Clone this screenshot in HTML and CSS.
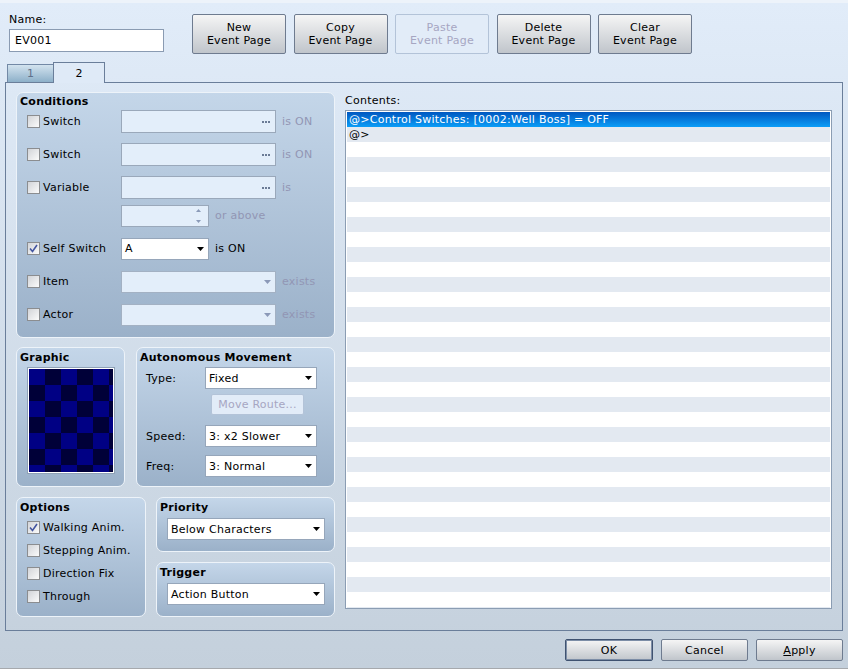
FILE: index.html
```html
<!DOCTYPE html>
<html lang="en">
<head>
  <meta charset="UTF-8">
  <meta name="viewport" content="width=device-width, initial-scale=1.0">
  <title>Event Page</title>
  <link rel="stylesheet" href="styles.css">
</head>
<body>

  <div class="window">
    <!-- Nome do evento e botoes de pagina -->
    <div class="top">
      <div class="name-field">
        <label for="name">Name:</label>
        <input type="text" id="name" value="EV001">
      </div>
      <div class="page-buttons">
        <button class="btn page-btn">New<br>Event Page</button>
        <button class="btn page-btn">Copy<br>Event Page</button>
        <button class="btn page-btn" disabled>Paste<br>Event Page</button>
        <button class="btn page-btn">Delete<br>Event Page</button>
        <button class="btn page-btn">Clear<br>Event Page</button>
      </div>
    </div>

    <div class="tabs">
      <div class="tab">1</div>
      <div class="tab active">2</div>
    </div>

    <div class="tab-panel">
      <div class="left-col">

        <!-- Condicoes -->
        <div class="group conditions">
          <h3 class="group-title">Conditions</h3>
          <div class="cond-list">
            <div class="cond-row">
              <label class="check cond-check"><span class="box"></span>Switch</label>
              <div class="field off wide"><svg class="dots" width="8" height="2"><rect x="0" width="2" height="2"/><rect x="3" width="2" height="2"/><rect x="6" width="2" height="2"/></svg></div>
              <span class="hint">is ON</span>
            </div>
            <div class="cond-row">
              <label class="check cond-check"><span class="box"></span>Switch</label>
              <div class="field off wide"><svg class="dots" width="8" height="2"><rect x="0" width="2" height="2"/><rect x="3" width="2" height="2"/><rect x="6" width="2" height="2"/></svg></div>
              <span class="hint">is ON</span>
            </div>
            <div class="cond-row">
              <label class="check cond-check"><span class="box"></span>Variable</label>
              <div class="field off wide"><svg class="dots" width="8" height="2"><rect x="0" width="2" height="2"/><rect x="3" width="2" height="2"/><rect x="6" width="2" height="2"/></svg></div>
              <span class="hint">is</span>
            </div>
            <div class="cond-row spin-row">
              <span class="cond-check"></span>
              <div class="field off narrow spin"><svg width="7" height="14"><polygon points="3.5,0 6,3 1,3"/><polygon points="1,11 6,11 3.5,14"/></svg></div>
              <span class="hint">or above</span>
            </div>
            <div class="cond-row">
              <label class="check cond-check"><span class="box"><svg width="11" height="11"><polyline points="2,5.5 4.5,8.5 9,2"/></svg></span>Self Switch</label>
              <div class="select narrow">A<svg class="arrow" width="7" height="4"><polygon points="0,0 7,0 3.5,4"/></svg></div>
              <span class="hint on">is ON</span>
            </div>
            <div class="cond-row">
              <label class="check cond-check"><span class="box"></span>Item</label>
              <div class="select off wide"><svg class="arrow" width="7" height="4"><polygon points="0,0 7,0 3.5,4"/></svg></div>
              <span class="hint">exists</span>
            </div>
            <div class="cond-row">
              <label class="check cond-check"><span class="box"></span>Actor</label>
              <div class="select off wide"><svg class="arrow" width="7" height="4"><polygon points="0,0 7,0 3.5,4"/></svg></div>
              <span class="hint">exists</span>
            </div>
          </div>
        </div>

        <div class="row-mid">
          <div class="group graphic">
            <h3 class="group-title">Graphic</h3>
            <div class="graphic-box"><div class="checker"></div></div>
          </div>

          <!-- Movimento autonomo -->
          <div class="group movement">
            <h3 class="group-title">Autonomous Movement</h3>
            <div class="move-rows">
              <div class="move-row">
                <span class="move-label">Type:</span>
                <div class="select move-select">Fixed<svg class="arrow" width="7" height="4"><polygon points="0,0 7,0 3.5,4"/></svg></div>
              </div>
              <button class="btn route-btn" disabled>Move Route...</button>
              <div class="move-row speed">
                <span class="move-label">Speed:</span>
                <div class="select move-select">3: x2 Slower<svg class="arrow" width="7" height="4"><polygon points="0,0 7,0 3.5,4"/></svg></div>
              </div>
              <div class="move-row freq">
                <span class="move-label">Freq:</span>
                <div class="select move-select">3: Normal<svg class="arrow" width="7" height="4"><polygon points="0,0 7,0 3.5,4"/></svg></div>
              </div>
            </div>
          </div>
        </div>

        <div class="row-bottom">
          <div class="group options">
            <h3 class="group-title">Options</h3>
            <div class="option-list">
              <label class="check opt"><span class="box"><svg width="11" height="11"><polyline points="2,5.5 4.5,8.5 9,2"/></svg></span>Walking Anim.</label>
              <label class="check opt"><span class="box"></span>Stepping Anim.</label>
              <label class="check opt"><span class="box"></span>Direction Fix</label>
              <label class="check opt"><span class="box"></span>Through</label>
            </div>
          </div>
          <div class="side-groups">
            <div class="group small-group">
              <h3 class="group-title">Priority</h3>
              <div class="select side-select">Below Characters<svg class="arrow" width="7" height="4"><polygon points="0,0 7,0 3.5,4"/></svg></div>
            </div>
            <div class="group small-group">
              <h3 class="group-title">Trigger</h3>
              <div class="select side-select">Action Button<svg class="arrow" width="7" height="4"><polygon points="0,0 7,0 3.5,4"/></svg></div>
            </div>
          </div>
        </div>
      </div>

      <!-- Lista de comandos -->
      <div class="right-col">
        <div class="contents-label">Contents:</div>
        <div class="list">
          <div class="list-rows">
            <div class="list-row selected">@&gt;Control Switches: [0002:Well Boss] = OFF</div>
            <div class="list-row">@&gt;</div>
          </div>
        </div>
      </div>
    </div>

    <div class="footer">
      <button class="btn foot-btn default">OK</button>
      <button class="btn foot-btn">Cancel</button>
      <button class="btn foot-btn"><u>A</u>pply</button>
    </div>
  </div>

</body>
</html>
```

FILE: styles.css
```css
* {
  margin: 0;
  padding: 0;
  box-sizing: border-box;
}

body {
  font-family: "DejaVu Sans", Verdana, sans-serif;
  font-size: 11px;
  line-height: 13px;
  letter-spacing: 0.25px;
  color: #000;
  background: #c4d0dc;
}

.window {
  width: 848px;
  height: 669px;
  display: flex;
  flex-direction: column;
  background: linear-gradient(#e1ecf9, #c4d0dc);
  border-top: 3px solid #edf3fa;
  border-bottom: 1px solid #a6a9ad;
}

/* topo */
.top {
  display: flex;
  height: 59px;
  padding: 10px 0 0 9px;
}

.name-field {
  display: flex;
  flex-direction: column;
  gap: 3px;
}

.name-field input {
  width: 155px;
  height: 23px;
  border: 1px solid #8a9bb2;
  background: #fff;
  font: inherit;
  letter-spacing: inherit;
  padding: 0 5px;
  outline: none;
}

.page-buttons {
  display: flex;
  gap: 7.5px;
  margin: 1px 0 0 28px;
}

.btn {
  font: inherit;
  line-height: 13px;
  letter-spacing: inherit;
  color: #000;
  border: 1px solid #6e7b8f;
  border-radius: 2px;
  background: linear-gradient(#f5f5f5, #c0c5cb);
  cursor: pointer;
}

.btn:disabled {
  color: #a6a6c2;
  border-color: #b3c3d8;
  background: #e2ecf8;
  cursor: default;
}

.page-btn {
  width: 94px;
  height: 40px;
}

/* abas */
.tabs {
  display: flex;
  align-items: flex-end;
  height: 20px;
  padding-left: 7px;
}

.tab {
  width: 47px;
  height: 18px;
  padding-top: 2px;
  border: 1px solid #7389a6;
  border-bottom: none;
  background: linear-gradient(#d3e3ef, #8db0c9);
  color: #5f708a;
  text-align: center;
}

.tab.active {
  width: 52px;
  height: 21px;
  padding-top: 4px;
  margin: 0 0 -1px -1px;
  background: #dfeaf7;
  border-color: #6a7e9a;
  color: #000;
  position: relative;
  z-index: 1;
}

.tab-panel {
  display: flex;
  gap: 10px;
  height: 549px;
  margin: 0 5px 0 5px;
  padding: 9px 10px 0 10px;
  border: 1px solid #6a7e9a;
}

.left-col {
  width: 319px;
  display: flex;
  flex-direction: column;
}

/* grupos */
.group {
  border: 1px solid #edf3f9;
  border-radius: 7px;
  background: linear-gradient(#c4d6e9, #9bb1c9);
  padding: 3px 3px 0;
}

.group-title {
  font-size: 11px;
  font-weight: bold;
  line-height: 13px;
}

.conditions {
  height: 246px;
  padding-top: 2px;
}

.cond-list {
  display: flex;
  flex-direction: column;
  gap: 10px;
  margin-top: 2px;
  padding-left: 7px;
}

.cond-row {
  display: flex;
  align-items: center;
  height: 23px;
}

.cond-row.spin-row {
  margin-top: -5px;
}

.check {
  display: flex;
  align-items: center;
}

.cond-check {
  width: 94px;
}

.box {
  width: 13px;
  height: 13px;
  margin-right: 3px;
  border: 1px solid #8b8d90;
  background: linear-gradient(135deg, #d2d4d8, #fbfbfb);
  display: flex;
  flex-shrink: 0;
}

.box polyline {
  fill: none;
  stroke: #4355a0;
  stroke-width: 1.6;
}

.field {
  height: 23px;
  border: 1px solid #9aa8ba;
  background: #fff;
  display: flex;
  align-items: center;
  justify-content: flex-end;
  padding-right: 5px;
}

.field.off {
  background: #e3eefa;
}

.dots {
  fill: #6b7b96;
}

.wide {
  width: 155px;
}

.narrow {
  width: 88px;
}

.field.spin {
  height: 22px;
  padding-right: 6px;
}

.spin polygon {
  fill: #8a9ab8;
}

.select {
  height: 22px;
  border: 1px solid #96a6ba;
  background: #fff;
  display: flex;
  align-items: center;
  justify-content: space-between;
  padding: 0 4px 0 3px;
  white-space: nowrap;
}

.select.off {
  background: #e3eefa;
  border-color: #a3b1c3;
  justify-content: flex-end;
}

.arrow polygon {
  fill: #000;
}

.select.off .arrow polygon {
  fill: #8b99b8;
}

.hint {
  margin-left: 6px;
  color: #9296b4;
}

.hint.on {
  color: #000;
}

/* grafico e movimento */
.row-mid {
  display: flex;
  gap: 11px;
  height: 140px;
  margin-top: 9px;
}

.graphic {
  width: 109px;
}

.graphic-box {
  width: 88px;
  height: 107px;
  margin: 3px 0 0 7px;
  padding: 1px;
  border: 1px solid #8ea1b6;
  background: #fff;
}

.checker {
  height: 100%;
  background: conic-gradient(#000038 0 25%, #000084 0 50%, #000038 0 75%, #000084 0);
  background-size: 32px 32px;
}

.movement {
  flex: 1;
}

.move-rows {
  display: flex;
  flex-direction: column;
  margin-top: 3px;
  padding-left: 6px;
}

.move-row {
  display: flex;
  align-items: center;
}

.move-row.speed {
  margin-top: 10px;
}

.move-row.freq {
  margin-top: 8px;
}

.move-label {
  width: 59px;
}

.move-select {
  width: 112px;
}

.route-btn {
  width: 93px;
  height: 21px;
  margin: 5px 0 0 65px;
}

/* opcoes, prioridade e gatilho */
.row-bottom {
  display: flex;
  gap: 10px;
  height: 120px;
  margin-top: 10px;
}

.options {
  width: 130px;
}

.option-list {
  display: flex;
  flex-direction: column;
  margin-top: 2px;
  padding-left: 7px;
}

.opt {
  height: 23px;
}

.side-groups {
  flex: 1;
  display: flex;
  flex-direction: column;
  gap: 10px;
}

.small-group {
  height: 55px;
}

.side-select {
  width: 158px;
  margin: 4px 0 0 7px;
}

/* conteudo */
.right-col {
  width: 487px;
}

.contents-label {
  margin-top: 2px;
}

.list {
  height: 499px;
  margin-top: 3px;
  padding: 1px 1px 0;
  border: 1px solid #8b9db3;
  background: #fff;
  overflow: hidden;
}

.list-rows {
  height: 100%;
  background: repeating-linear-gradient(#fff 0 15px, #e3e9f1 15px 30px);
}

.list-row {
  height: 15px;
  line-height: 15px;
  padding-left: 2px;
  white-space: nowrap;
}

.list-row.selected {
  background: linear-gradient(#0057c0, #0b9df7);
  color: #fff;
}

/* rodape */
.footer {
  flex: 1;
  display: flex;
  justify-content: flex-end;
  gap: 8px;
  padding: 8px 5px 0 0;
}

.foot-btn {
  width: 87px;
  height: 22px;
}

.foot-btn.default {
  width: 88px;
  border-color: #3f5270;
  box-shadow: inset 0 0 0 1px #7c8da6;
}
```
